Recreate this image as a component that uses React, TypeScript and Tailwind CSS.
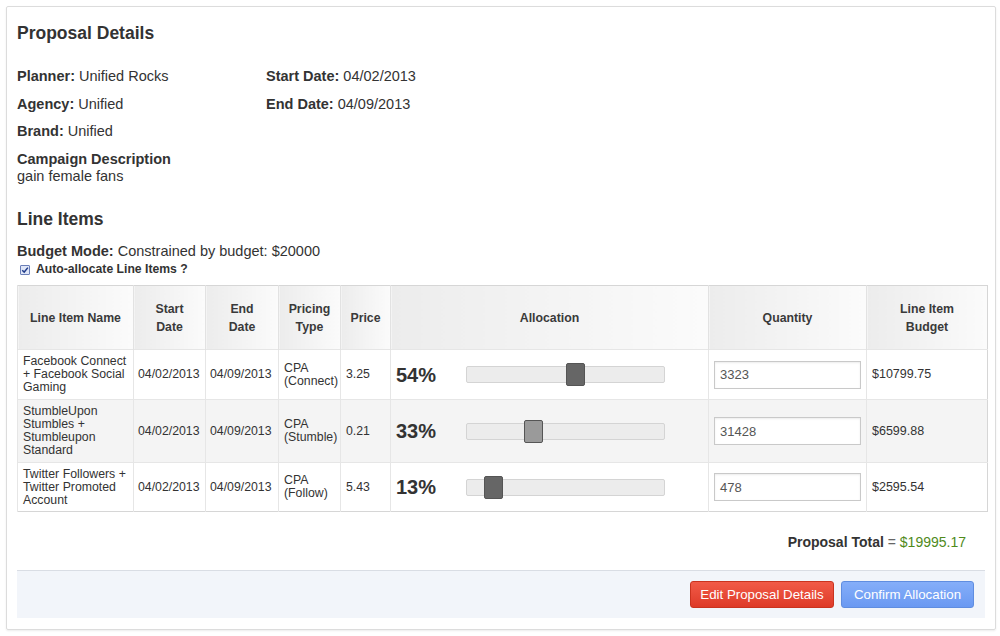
import React from "react";

const rows = [
  { name: ["Facebook Connect", "+ Facebook Social", "Gaming"], type: ["CPA", "(Connect)"], price: "3.25", pct: "54%", thumb: 99, thumbColor: "bg-[#666666]", qty: "3323", budget: "$10799.75", bg: "bg-white", h: "h-[50px]" },
  { name: ["StumbleUpon", "Stumbles +", "Stumbleupon", "Standard"], type: ["CPA", "(Stumble)"], price: "0.21", pct: "33%", thumb: 57, thumbColor: "bg-[#9a9a9a]", qty: "31428", budget: "$6599.88", bg: "bg-[#f4f4f4]", h: "h-[63px]" },
  { name: ["Twitter Followers +", "Twitter Promoted", "Account"], type: ["CPA", "(Follow)"], price: "5.43", pct: "13%", thumb: 17, thumbColor: "bg-[#666666]", qty: "478", budget: "$2595.54", bg: "bg-white", h: "h-[49px]" },
];

const th = "border-l border-[#e2e2e2] bg-gradient-to-r from-[#ececec] to-[#fbfbfb] text-[12.3px] font-bold text-[#3a3a3a] leading-[18px] text-center align-middle";
const td = "border-l border-[#e6e6e6] border-t text-[12.3px] text-[#333] leading-[13px] align-middle";

export default function App() {
  return (
    <div className="w-[1000px] h-[636px] bg-white p-[6px] font-['Liberation_Sans',Arial,sans-serif] text-[#333]">
      <div className="w-[990px] border border-[#dcdcdc] rounded-[2px] shadow-[0_1px_2px_rgba(0,0,0,0.08)] px-[10px] pt-[15px] pb-[11px] flex flex-col">
        <h1 className="text-[17.5px] font-bold leading-[22px] text-[#333]">Proposal Details</h1>
        <div className="mt-[24px] flex text-[14.5px] leading-[16px]">
          <div className="w-[249px] flex flex-col">
            <div><b>Planner:</b> Unified Rocks</div>
            <div className="mt-[12px]"><b>Agency:</b> Unified</div>
            <div className="mt-[11px]"><b>Brand:</b> Unified</div>
            <div className="mt-[12px] font-bold">Campaign Description</div>
            <div className="mt-[1px]">gain female fans</div>
          </div>
          <div className="flex flex-col">
            <div><b>Start Date:</b> 04/02/2013</div>
            <div className="mt-[12px]"><b>End Date:</b> 04/09/2013</div>
          </div>
        </div>
        <h2 className="mt-[24px] text-[17.5px] font-bold leading-[22px]">Line Items</h2>
        <div className="mt-[13px] text-[14.5px] leading-[17px]"><b>Budget Mode:</b> Constrained by budget: $20000</div>
        <div className="mt-[3px] flex items-center gap-[6px] pl-[3px] text-[12.2px] font-bold leading-[13px]">
          <span className="w-[10px] h-[10px] border border-[#6b7fb8] bg-[#dfe6f7] rounded-[1px] flex items-center justify-center">
            <svg viewBox="0 0 10 10" className="w-[8px] h-[8px]"><path d="M1.5 5.2 L4 7.6 L8.6 2" fill="none" stroke="#1f3b8a" strokeWidth="1.8" /></svg>
          </span>
          <span>Auto-allocate Line Items ?</span>
        </div>
        <table className="mt-[9px] w-[970px] border border-[#d6d6d6] border-collapse table-fixed">
          <colgroup>
            <col className="w-[116px]" />
            <col className="w-[72px]" />
            <col className="w-[73px]" />
            <col className="w-[62px]" />
            <col className="w-[50px]" />
            <col className="w-[318px]" />
            <col className="w-[158px]" />
            <col className="w-[121px]" />
          </colgroup>
          <thead>
            <tr className="h-[64px]">
              <th className={th}>Line Item Name</th>
              <th className={th}>Start<br />Date</th>
              <th className={th}>End<br />Date</th>
              <th className={th}>Pricing<br />Type</th>
              <th className={th}>Price</th>
              <th className={th}>Allocation</th>
              <th className={th}>Quantity</th>
              <th className={th}>Line Item<br />Budget</th>
            </tr>
          </thead>
          <tbody>
            {rows.map((r, i) => (
              <tr key={i} className={`${r.bg} ${r.h}`}>
                <td className={`${td} pl-[5px] pr-[2px]`}>{r.name.map((n, j) => <div key={j}>{n}</div>)}</td>
                <td className={`${td} pl-[4px]`}>04/02/2013</td>
                <td className={`${td} pl-[4px]`}>04/09/2013</td>
                <td className={`${td} pl-[5px]`}>{r.type.map((n, j) => <div key={j}>{n}</div>)}</td>
                <td className={`${td} pl-[5px]`}>{r.price}</td>
                <td className={`${td} pl-[5px]`}>
                  <div className="flex items-center">
                    <span className="w-[70px] text-[20px] font-bold leading-[24px] text-[#333]">{r.pct}</span>
                    <div className="relative w-[199px] h-[17px] bg-[#ececec] border border-[#d4d4d4] rounded-[2px]">
                      <div className={`absolute top-[-4px] w-[19px] h-[23px] ${r.thumbColor} border border-[#555] rounded-[2px]`} style={{ left: r.thumb }} />
                    </div>
                  </div>
                </td>
                <td className={`${td} px-[5px]`}>
                  <div className="w-[147px] h-[28px] bg-white border border-[#c9c9c9] shadow-[inset_0_1px_2px_rgba(0,0,0,0.08)] flex items-center pl-[5px] text-[13px] text-[#555]">{r.qty}</div>
                </td>
                <td className={`${td} pl-[5px] text-[12.5px]`}>{r.budget}</td>
              </tr>
            ))}
          </tbody>
        </table>
        <div className="mt-[21px] pr-[19px] text-right text-[14px] leading-[18px]">
          <b className="text-[#333]">Proposal Total</b> <span className="text-[#666]">=</span> <span className="text-[#4f8a1b]">$19995.17</span>
        </div>
        <div className="mt-[19px] h-[48px] bg-[#f2f5fa] border-t border-[#d9dde4] flex items-center justify-end gap-[7px] pr-[11px]">
          <button className="w-[144px] h-[27px] rounded-[3px] bg-gradient-to-b from-[#f15a47] to-[#de3a28] border border-[#c9331f] text-white text-[13.3px] leading-[16px]">Edit Proposal Details</button>
          <button className="w-[133px] h-[27px] rounded-[3px] bg-gradient-to-b from-[#85aef9] to-[#6a99f2] border border-[#5f8de0] text-white text-[13.3px] leading-[16px]">Confirm Allocation</button>
        </div>
      </div>
    </div>
  );
}
